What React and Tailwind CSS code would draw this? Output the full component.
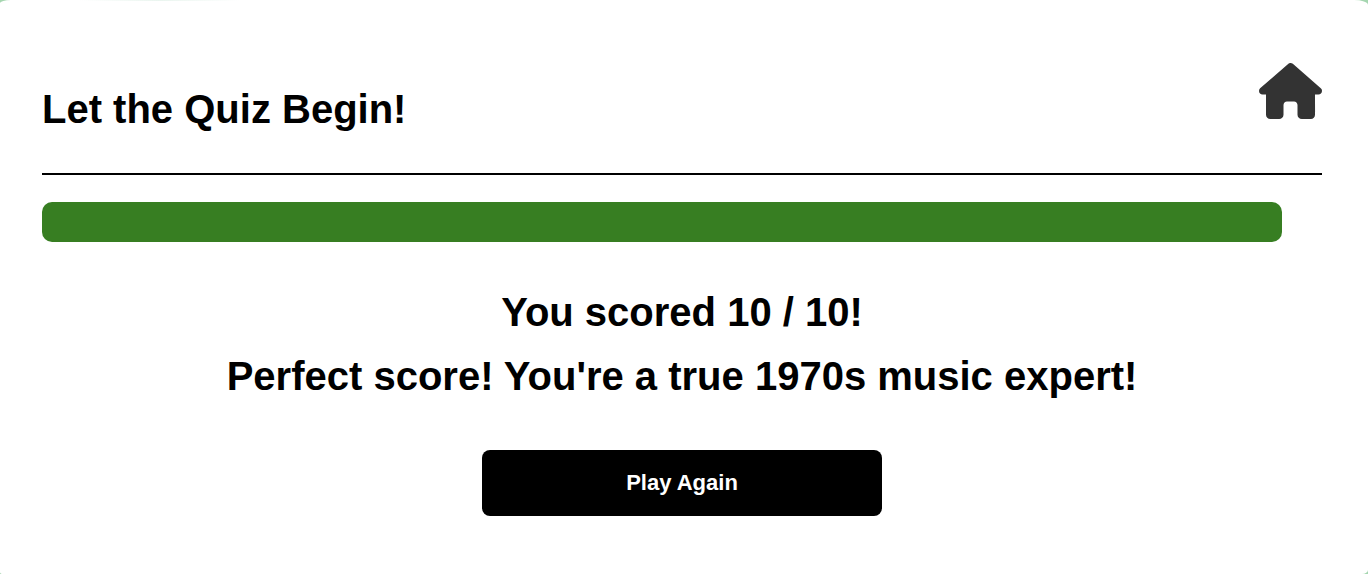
import { FaHouse } from "react-icons/fa6";

function Header({ title }) {
  return (
    <header className="flex items-center justify-between border-b-2 border-black pb-9">
      <h1 className="pt-6 pb-1 text-[40px] leading-12 font-bold">{title}</h1>
      <a href="#home" aria-label="Home" className="pb-4 text-[#333333]">
        <FaHouse className="h-14 w-[63px]" />
      </a>
    </header>
  );
}

function Progress({ value, max }) {
  return (
    <div
      role="progressbar"
      aria-label="Quiz progress"
      aria-valuemin={0}
      aria-valuemax={max}
      aria-valuenow={value}
      className="mt-[27px] pr-10"
    >
      <div
        className="h-10 rounded-[10px] bg-[#377e22]"
        style={{ width: `${(value / max) * 100}%` }}
      />
    </div>
  );
}

export default function App() {
  const score = 10;
  const total = 10;

  return (
    <div className="min-h-screen bg-[#a5d6b0] font-['Liberation_Sans',Arial,sans-serif] text-black">
      <main className="min-h-screen rounded-tl-[11px_3px] rounded-tr-[14px_5px] rounded-br-[6px_4px] rounded-bl-[3px_2px] bg-white">
        <div className="mr-auto ml-20 h-px w-40 bg-linear-to-r from-white via-[#eaf5ef] to-white" />
        <div className="pt-[60px] pr-[46px] pb-14 pl-[42px]">
          <Header title="Let the Quiz Begin!" />
          <Progress value={total} max={total} />
          <section className="mt-[38px] flex flex-col items-center text-center">
            <h2 className="text-[40px] leading-16 font-bold">
              You scored {score} / {total}!
            </h2>
            <h2 className="text-[40px] leading-16 font-bold">
              Perfect score! You're a true 1970s music expert!
            </h2>
            <button
              type="button"
              className="mt-[42px] h-[66px] w-[400px] max-w-full rounded-lg bg-black pb-0.5 text-[22px] font-bold text-white"
            >
              Play Again
            </button>
          </section>
        </div>
      </main>
    </div>
  );
}
